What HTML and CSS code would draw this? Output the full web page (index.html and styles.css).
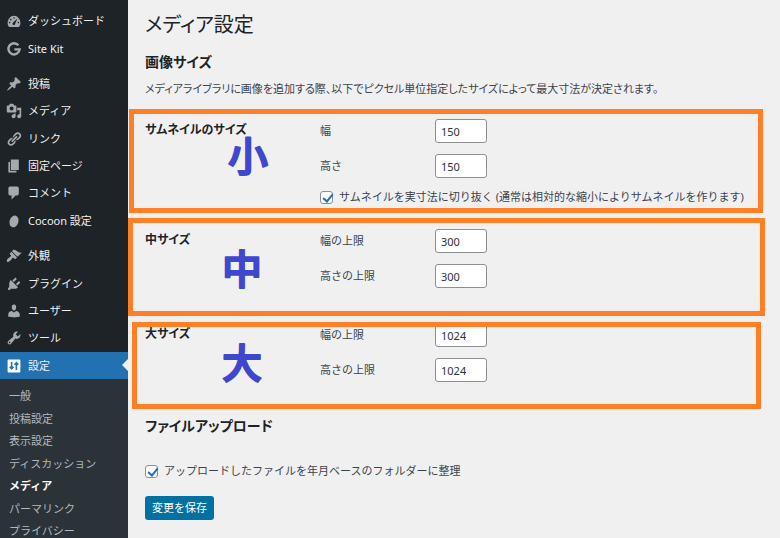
FILE: index.html
```
<!DOCTYPE html>
<html lang="ja">
  <head>
    <meta charset="UTF-8" />
    <meta name="viewport" content="width=device-width, initial-scale=1.0" />
    <title>メディア設定</title>
    <link rel="stylesheet" href="styles.css">
  </head>
  <body>
    <nav class="sidebar">
      <ul class="menu menu-top">
        <li><a href="#"><svg viewBox="0 0 20 20"><path d="M3.800 17.500h12.400c1.100-1.400 1.800-3.100 1.800-5 0-4.900-3.600-9-8-9s-8 4.100-8 9c0 1.900.7 3.600 1.800 5z"/><g class="cut"><circle cx="10" cy="6.300" r="1"/><circle cx="6" cy="8.300" r="1"/><circle cx="4.500" cy="12" r="1"/><circle cx="15.500" cy="12" r="1"/><path d="M14.200 7l-2.700 6.500a1.700 1.700 0 1 1-2.600-1.600z"/></g></svg>ダッシュボード</a></li>
        <li><a href="#"><svg viewBox="0 0 20 20"><path class="line" d="M15.500 5.400A7 7 0 1 0 17 10.500h-6.500"/></svg>Site Kit</a></li>
      </ul>
      <ul class="menu menu-content">
        <li><a href="#"><svg viewBox="0 0 20 20"><path d="M10.440 3.020l1.820-1.820 6.360 6.350-1.830 1.820c-1.050-.68-2.480-.57-3.410.36l-.75.75c-.92.93-1.040 2.350-.35 3.410l-1.830 1.820-2.410-2.410-2.800 2.790c-.42.42-3.380 2.710-3.800 2.290s1.860-3.390 2.280-3.810l2.790-2.790L4.100 9.360l1.830-1.820c1.050.69 2.480.57 3.400-.36l.75-.75c.93-.92 1.050-2.350.36-3.410z"/></svg>投稿</a></li>
        <li><a href="#"><svg viewBox="0 0 20 20"><path fill-rule="evenodd" d="M13 11V4c0-.55-.45-1-1-1h-1.670L9 1H5L3.670 3H2c-.55 0-1 .45-1 1v7c0 .55.45 1 1 1h10c.55 0 1-.45 1-1zM7 4.500c1.380 0 2.500 1.120 2.500 2.500S8.380 9.500 7 9.500 4.500 8.380 4.500 7 5.620 4.500 7 4.500zM14 6h5v10.500c0 1.380-1.120 2.500-2.500 2.500S14 17.880 14 16.500s1.120-2.500 2.500-2.500c.17 0 .34.02.5.05V9h-3V6zm-4 8.050V13h2v3.500c0 1.380-1.120 2.500-2.500 2.500S7 17.880 7 16.500 8.120 14 9.500 14c.17 0 .34.02.5.05z"/></svg>メディア</a></li>
        <li><a href="#"><svg viewBox="0 0 20 20"><path d="M17.740 2.760c1.680 1.690 1.680 4.410 0 6.100l-1.530 1.520c-1.120 1.120-2.700 1.470-4.140 1.090l2.620-2.610.76-.77.76-.76c.84-.84.84-2.200 0-3.040-.84-.85-2.200-.85-3.040 0l-.77.76-3.380 3.380c-.37-1.440-.02-3.020 1.100-4.140l1.520-1.530c1.690-1.680 4.420-1.680 6.100 0zM8.590 13.430l5.340-5.340c.42-.42.42-1.100 0-1.520-.44-.43-1.130-.39-1.530 0l-5.330 5.340c-.42.42-.42 1.100 0 1.520.44.43 1.130.39 1.520 0zm-.76 2.290l4.140-4.150c.38 1.440.03 3.020-1.090 4.140l-1.520 1.530c-1.690 1.680-4.410 1.680-6.100 0-1.680-1.680-1.680-4.420 0-6.100l1.530-1.520c1.120-1.120 2.700-1.470 4.140-1.100l-4.140 4.150c-.85.84-.85 2.200 0 3.050.84.84 2.200.84 3.040 0z"/></svg>リンク</a></li>
        <li><a href="#"><svg viewBox="0 0 20 20"><path d="M6 15V2h10v13H6zm-1 1h8v2H3V5h2v11z"/></svg>固定ページ</a></li>
        <li><a href="#"><svg viewBox="0 0 20 20"><path d="M5 2h9c1.100 0 2 .9 2 2v7c0 1.100-.9 2-2 2h-2l-5 5v-5H5c-1.100 0-2-.9-2-2V4c0-1.100.9-2 2-2z"/></svg>コメント</a></li>
        <li><a href="#"><svg viewBox="0 0 20 20"><ellipse cx="10" cy="10.500" rx="5.500" ry="7.500" transform="rotate(18 10 10.500)"/></svg>Cocoon 設定</a></li>
      </ul>
      <ul class="menu menu-admin">
        <li><a href="#"><svg viewBox="0 0 20 20"><path d="M14.480 11.060L7.410 3.990l1.500-1.500c.5-.56 2.300-.47 3.510.32 1.210.8 1.430 1.280 2.910 2.100 1.180.64 2.450 1.260 4.450.85zm-.71.71L6.700 4.700 4.930 6.470c-.39.39-.39 1.020 0 1.410l1.060 1.060c.39.39.39 1.030 0 1.420-.6.6-1.430 1.110-2.210 1.690-.35.26-.7.53-1.010.84C1.430 14.230.4 16.080 1.400 17.070c.99 1 2.840-.03 4.180-1.360.31-.31.58-.66.85-1.020.57-.78 1.080-1.610 1.690-2.210.39-.39 1.020-.39 1.410 0l1.060 1.060c.39.39 1.020.39 1.410 0z"/></svg>外観</a></li>
        <li><a href="#"><svg viewBox="0 0 20 20"><path d="M13.110 4.360L9.870 7.600 8 5.730l3.240-3.240c.35-.34 1.050-.2 1.560.32.52.51.66 1.210.31 1.550zm-8 1.770l.91-1.120 9.010 9.010-1.190.84c-.71.71-2.630 1.160-3.820 1.160H6.140L4.900 17.260c-.59.59-1.540.59-2.120 0-.59-.58-.59-1.530 0-2.120l1.240-1.240v-3.880c0-1.130.4-3.190 1.090-3.890zm7.260 3.970l3.240-3.240c.34-.35 1.040-.21 1.550.31.52.51.66 1.210.31 1.550l-3.240 3.250z"/></svg>プラグイン</a></li>
        <li><a href="#"><svg viewBox="0 0 20 20"><path d="M10 9.250c-2.270 0-2.730-3.440-2.730-3.440C7 4.020 7.820 2 9.970 2c2.160 0 2.980 2.020 2.710 3.810 0 0-.41 3.440-2.680 3.440zm0 2.570L12.720 10c2.390 0 4.520 2.330 4.520 4.530v2.490s-3.650 1.130-7.240 1.130c-3.650 0-7.240-1.130-7.240-1.130v-2.490c0-2.250 1.940-4.480 4.470-4.480z"/></svg>ユーザー</a></li>
        <li><a href="#"><svg viewBox="0 0 20 20"><path fill-rule="evenodd" d="M16.680 9.770c-1.340 1.340-3.300 1.670-4.950.99l-5.410 6.520c-.99.99-2.590.99-3.580 0s-.99-2.590 0-3.570l6.520-5.420c-.68-1.650-.35-3.610.99-4.950 1.280-1.280 3.120-1.620 4.720-1.060l-2.890 2.890 2.820 2.820 2.860-2.870c.53 1.580.18 3.390-1.080 4.650zM3.810 16.210c.4.39 1.040.39 1.430 0 .4-.4.4-1.040 0-1.430-.39-.4-1.030-.4-1.430 0-.39.39-.39 1.030 0 1.430z"/></svg>ツール</a></li>
        <li class="current"><a href="#"><svg viewBox="0 0 20 20"><rect x="2" y="2" width="16" height="16" rx="1"/><path class="arrows" d="M7 5v9M4.700 11L7 13.500 9.300 11M13 15V6M10.700 8.500L13 6l2.300 2.500"/></svg>設定</a></li>
      </ul>
      <ul class="submenu">
        <li><a href="#">一般</a></li>
        <li><a href="#">投稿設定</a></li>
        <li><a href="#">表示設定</a></li>
        <li><a href="#">ディスカッション</a></li>
        <li><a href="#" class="active">メディア</a></li>
        <li><a href="#">パーマリンク</a></li>
        <li><a href="#">プライバシー</a></li>
      </ul>
    </nav>

    <main class="content">
      <form>
        <h1>メディア設定</h1>
        <h2>画像サイズ</h2>
        <p class="description">メディアライブラリに画像を追加する際、以下でピクセル単位指定したサイズによって最大寸法が決定されます。</p>

        <section class="size thumbnail">
          <h3>サムネイルのサイズ</h3>
          <div class="fields">
            <div class="field">
              <label for="thumb-w">幅</label>
              <input type="number" id="thumb-w" value="150" />
            </div>
            <div class="field">
              <label for="thumb-h">高さ</label>
              <input type="number" id="thumb-h" value="150" />
            </div>
            <div class="check">
              <input type="checkbox" id="crop" checked />
              <label for="crop">サムネイルを実寸法に切り抜く (通常は相対的な縮小によりサムネイルを作ります)</label>
            </div>
          </div>
          <div class="frame"></div>
          <svg class="mark" viewBox="0 0 48 60"><text x="4" y="45">小</text></svg>
        </section>

        <section class="size medium">
          <h3>中サイズ</h3>
          <div class="fields">
            <div class="field">
              <label for="medium-w">幅の上限</label>
              <input type="number" id="medium-w" value="300" />
            </div>
            <div class="field">
              <label for="medium-h">高さの上限</label>
              <input type="number" id="medium-h" value="300" />
            </div>
          </div>
          <div class="frame"></div>
          <svg class="mark" viewBox="0 0 48 60"><text x="4" y="45">中</text></svg>
        </section>

        <section class="size large">
          <h3>大サイズ</h3>
          <div class="fields">
            <div class="field">
              <label for="large-w">幅の上限</label>
              <input type="number" id="large-w" value="1024" />
            </div>
            <div class="field">
              <label for="large-h">高さの上限</label>
              <input type="number" id="large-h" value="1024" />
            </div>
          </div>
          <div class="frame"></div>
          <svg class="mark" viewBox="0 0 48 60"><text x="4" y="45">大</text></svg>
        </section>

        <h2 class="upload-title">ファイルアップロード</h2>
        <div class="check upload">
          <input type="checkbox" id="folders" checked />
          <label for="folders">アップロードしたファイルを年月ベースのフォルダーに整理</label>
        </div>
        <button type="submit" class="save">変更を保存</button>
      </form>
    </main>
  </body>
</html>
```

FILE: styles.css
```
* {
  box-sizing: border-box;
}
body {
  margin: 0;
  display: flex;
  height: 100vh;
  overflow: hidden;
  background: #f0f0f1;
  color: #3c434a;
  font-family: "Noto Sans", "Noto Sans CJK JP", sans-serif;
  font-size: 11px;
  line-height: 16px;
}
h1, h2, h3, p, ul {
  margin: 0;
  padding: 0;
}
ul {
  list-style: none;
}
h1, h2, h3, .description {
  font-feature-settings: "palt";
}

/* sidebar */
.sidebar {
  flex: 0 0 128px;
  display: flex;
  flex-direction: column;
  padding-top: 7px;
  background: #1d2327;
}
.menu {
  flex: none;
  display: grid;
  grid-auto-rows: 1fr;
  margin-bottom: 8px;
}
.menu-top {
  height: 55px;
}
.menu-content {
  height: 164px;
}
.menu-admin {
  height: 137px;
  margin-bottom: 0;
}
.menu a {
  display: flex;
  align-items: center;
  gap: 6px;
  height: 100%;
  padding-top: 1px;
  padding-left: 6px;
  color: #f0f0f1;
  text-decoration: none;
}
.menu svg {
  width: 16px;
  height: 16px;
  fill: #a7aaad;
}
.menu .cut {
  fill: #1d2327;
}
.menu .line {
  fill: none;
  stroke: #a7aaad;
  stroke-width: 3;
}
.menu .arrows {
  fill: none;
  stroke: #2271b1;
  stroke-width: 2;
}
.menu .current {
  position: relative;
  background: #2271b1;
}
.menu .current svg {
  fill: #fff;
}
.current::after {
  content: "";
  position: absolute;
  right: 0;
  top: 50%;
  margin-top: -6px;
  border: 6px solid transparent;
  border-left-width: 0;
  border-right-color: #f0f0f1;
}
.submenu {
  flex: 1 0 auto;
  display: grid;
  grid-template-rows: repeat(7, 1fr);
  height: 164px;
  padding: 6px 0 0 9px;
  background: #2c3338;
}
.submenu a {
  color: #b4b8bc;
  line-height: 22px;
  text-decoration: none;
}
.submenu .active {
  color: #fff;
  font-weight: 700;
}

/* settings form */
.content {
  flex: 1;
  min-width: 0;
  padding-top: 10px;
}
h1, h2, .description, .upload {
  margin-left: 17px;
}
h1 {
  color: #1d2327;
  font-size: 20px;
  font-weight: 400;
  line-height: 30px;
}
h2 {
  margin-top: 12px;
  color: #1d2327;
  font-size: 14px;
  line-height: 20px;
}
.description {
  margin-top: 9px;
  margin-bottom: 12px;
}
.size {
  position: relative;
  display: grid;
  grid-template-columns: 175px 1fr;
  padding: 10px 0 0 17px;
}
.thumbnail {
  height: 110px;
}
.medium {
  height: 94px;
}
.large {
  height: 96px;
}
h3 {
  color: #1d2327;
  font-size: 12px;
  line-height: 22px;
}
.field {
  display: grid;
  grid-template-columns: 115px 52px;
  align-items: center;
  margin-bottom: 11px;
}
input[type="number"] {
  width: 52px;
  height: 24px;
  padding: 0 5px;
  border: 1px solid #8c8f94;
  border-radius: 3px;
  background: #fff;
  color: #2c3338;
  font: inherit;
  appearance: textfield;
}
.check {
  display: flex;
  align-items: center;
  gap: 6px;
  white-space: nowrap;
}
input[type="checkbox"] {
  appearance: none;
  width: 13px;
  height: 13px;
  margin: 0;
  border: 1px solid #8c8f94;
  border-radius: 3px;
  background: #fff;
}
input[type="checkbox"]:checked::before {
  content: "";
  display: block;
  width: 4px;
  height: 8px;
  margin-left: 4px;
  border: solid #2271b1;
  border-width: 0 2px 2px 0;
  transform: rotate(40deg);
}

/* highlight frames drawn over the sections */
.frame {
  position: absolute;
  border: 5px solid #ff7f27;
  pointer-events: none;
}
.thumbnail .frame {
  inset: 0 17px 6px 1px;
}
.medium .frame {
  inset: -1px 15px -3px 0;
}
.large .frame {
  inset: 9px 19px 0 4px;
}
.mark {
  position: absolute;
  left: 90px;
  top: 20px;
  width: 48px;
  height: 60px;
  overflow: visible;
  fill: #3f48cc;
  stroke: #3f48cc;
  stroke-width: 2;
  stroke-linejoin: round;
  font-family: "Noto Sans CJK JP", sans-serif;
  font-size: 40px;
  font-weight: 500;
  pointer-events: none;
}
.thumbnail .mark {
  left: 96px;
  top: 17px;
}

.upload-title {
  margin-top: 7px;
}
.upload {
  margin-top: 27px;
}
.save {
  height: 24px;
  margin: 17px 0 0 17px;
  padding: 0 7px;
  border: 0;
  border-radius: 3px;
  background: #0071a1;
  color: #fff;
  font: inherit;
}
```
